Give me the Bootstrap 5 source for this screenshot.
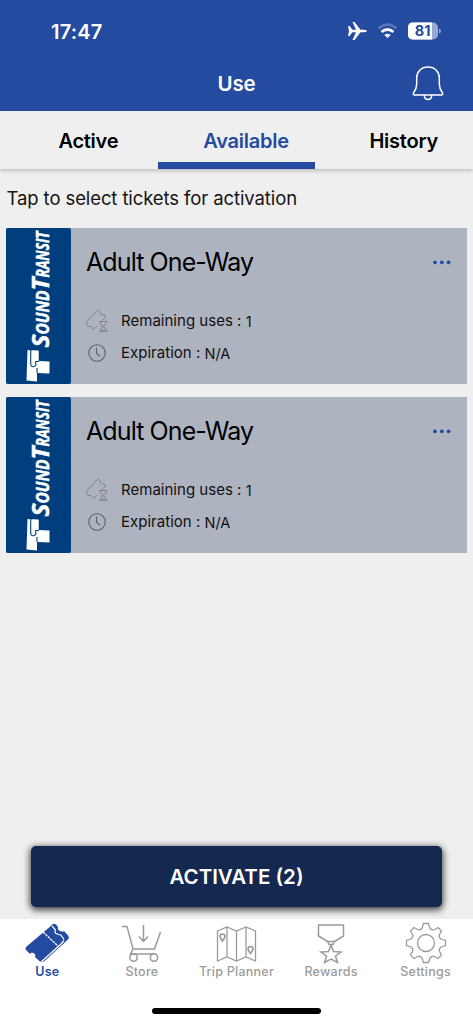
<!DOCTYPE html>
<html lang="en">
<head>
<meta charset="utf-8">
<meta name="viewport" content="width=device-width, initial-scale=1">
<title>Use tickets</title>
<link href="https://cdn.jsdelivr.net/npm/bootstrap@5.3.0/dist/css/bootstrap.min.css" rel="stylesheet">
<style>
  :root { --brand: #244b9f; --navy: #15284f; --line: #9b9b9b; }
  body { font-family: Inter, "Liberation Sans", sans-serif; background: #efefef; color: #000; height: 1024px; overflow: hidden; }
  svg { display: block; flex: none; }
  .app-top { background: var(--brand); height: 111px; color: #fff; }
  .status { height: 62px; padding: 0 32px 0 51px; }
  .clock { font-size: 20px; font-weight: 600; letter-spacing: .2px; padding-top: 2px; }
  .app-title { font-size: 20.5px; font-weight: 600; letter-spacing: -.1px; height: 43px; padding-top: 1px; }
  .bell { right: 29px; top: 4px; }
  .tabs { height: 58px; box-shadow: 0 2px 4px rgba(0,0,0,.2); background: #efefef; }
  .tabs a { color: #000; font-size: 20px; font-weight: 600; padding-left: 19px; padding-top: 8px; border-bottom: 7px solid transparent; letter-spacing: -.25px; }
  .tabs a.current { color: var(--brand); border-color: var(--brand); }
  .prompt { font-size: 18.5px; line-height: 24px; padding: 17px 7px 0 6.5px; margin-bottom: 18px; letter-spacing: -.1px; color: #141414; }
  .ticket { height: 156px; margin: 0 6px 13px; background: #adb3bf; }
  .agency { width: 65px; background: #003e7e; border-radius: 2px; }
  .ticket-body { padding: 18px 16px 0 15px; }
  .ticket-name { font-size: 25px; line-height: 33px; font-weight: 400; letter-spacing: -.9px; margin-bottom: 26px; }
  .fact { font-size: 15px; height: 32px; color: #111; }
  .fact-icon { width: 22px; margin-right: 13px; }
  .fact-label { letter-spacing: .02px; }
  .fact-value { font-size: 14.5px; position: relative; top: 1px; }
  .activate { margin: 0 31px 12px; height: 61px; padding-top: 3px; background: var(--navy); color: #fff; border: 0; border-radius: 5px; font-size: 20.5px; font-weight: 600; box-shadow: 0 2px 7px 1px rgba(0,0,0,.75); }
  .dock { height: 105px; background: #fff; }
  .dock a { color: var(--line); font-size: 12.5px; font-weight: 500; line-height: 16px; padding-top: 3px; letter-spacing: .25px; }
  .dock a.current { color: var(--brand); font-weight: 600; }
  .home-bar { width: 169px; height: 6px; border-radius: 3px; background: #000; margin-bottom: 10px; }
</style>
</head>
<body class="d-flex flex-column">
<svg width="0" height="0" class="position-absolute">
  <defs>
    <symbol id="agency-logo" viewBox="0 0 65 156">
      <text transform="translate(43.3 119.5) rotate(-90)" font-family="Open Sans, sans-serif" font-weight="700" font-style="italic" fill="#fff" stroke="#fff" stroke-width=".5"><tspan font-size="22.500" textLength="13" lengthAdjust="spacingAndGlyphs">S</tspan><tspan font-size="18" textLength="44" lengthAdjust="spacingAndGlyphs">OUND</tspan><tspan font-size="22.500" textLength="13" lengthAdjust="spacingAndGlyphs">T</tspan><tspan font-size="18" textLength="46" lengthAdjust="spacingAndGlyphs">RANSIT</tspan></text>
      <path fill="#fff" d="M21.500 122 32.500 123V133L43.500 133.500V145.500L31 145V153.500L20.500 152.500z"/>
      <path fill="none" stroke="#003e7e" stroke-width="1.100" d="M24.700 121V136Q25 139.500 28 138.500T29.500 135V133.500H33M20.500 137.500V139M31 145V140"/>
      <path fill="#fff" d="M26 122.500H32.500V132.500H30Q28.800 133 28.800 135.500Q28.300 137.500 27 137.500T26 136z"/>
    </symbol>
    <symbol id="uses" viewBox="0 0 22 24">
      <g fill="none" stroke="#828487" stroke-width="1"><path d="M11 17 7.500 20.500Q6 20 6 18.500T3 17.500T.8 12.500L11.500 1.500Q13 .5 14 2.500Q13.500 5 15.500 5.500T18.500 6L19.500 8 16 11.500"/><path d="M13 12.500H21.500M13 22.500H21.500M14 12.500Q14 16 17.200 17.500Q20.500 16 20.500 12.500M14 22.500Q14 19 17.200 17.500Q20.500 19 20.500 22.500M15.500 21H19"/></g>
    </symbol>
    <symbol id="expiry" viewBox="0 0 22 22"><g fill="none" stroke="#5e6268" stroke-width="1.100"><circle cx="11" cy="11" r="8.200"/><path d="M10.500 5.500V11.500L14 14"/></g></symbol>
  </defs>
</svg>

<header class="app-top">
  <div class="status d-flex align-items-center justify-content-between">
    <span class="clock">17:47</span>
    <svg width="94" height="22" viewBox="0 0 94 22">
      <path fill="#fff" d="M1 6H2.500L5.500 9.700H9L5.500 2H7.500L13.500 9.700H17Q20 10 20 11T17 12.300H13.500L7.500 20H5.500L9 12.300H5.500L2.500 16H1L2 11z"/>
      <path d="M31.500 8.500Q40.500 .500 49.500 8.500" fill="none" stroke="#5a77b8" stroke-width="2.500"/>
      <path d="M34.500 12Q40.500 7 46.500 12" fill="none" stroke="#fff" stroke-width="2.700"/>
      <path d="M37.300 15Q40.500 12.500 43.700 15L40.500 18z" fill="#fff"/>
      <rect x="61" y="2.500" width="30" height="17" rx="5" fill="#98a9d1"/>
      <path d="M66 2.500H85V19.500H66Q61 19.500 61 14.500V7.500Q61 2.500 66 2.500z" fill="#fff"/>
      <path d="M92 8.500Q94 9 94 11T92 13.500z" fill="#98a9d1"/>
      <text x="75.700" y="16.200" font-size="14.500" font-weight="700" text-anchor="middle" fill="#244b9f">81</text>
    </svg>
  </div>
  <div class="app-title position-relative d-flex align-items-center justify-content-center">
    Use
    <svg class="bell position-absolute" width="32" height="35" viewBox="0 0 32 35" fill="none" stroke="#fff" stroke-width="1.500"><path d="M16 1C9 1 4.700 6 4.700 12V18C4.700 22 3 25 1.500 27Q1 29 2.500 29H29.500Q31 29 30.500 27C29 25 27.300 22 27.300 18V12C27.300 6 23 1 16 1zM12.300 29Q12.300 33.500 16 33.500T19.700 29"/></svg>
  </div>
</header>

<nav class="tabs row g-0 flex-shrink-0 text-center">
  <a href="#" class="col d-flex align-items-center justify-content-center text-decoration-none">Active</a>
  <a href="#" class="col d-flex align-items-center justify-content-center text-decoration-none current">Available</a>
  <a href="#" class="col d-flex align-items-center justify-content-center text-decoration-none">History</a>
</nav>

<main class="flex-grow-1">
  <p class="prompt">Tap to select tickets for activation</p>
  <article class="ticket d-flex">
    <div class="agency"><svg width="65" height="156"><use href="#agency-logo"/></svg></div>
    <div class="ticket-body flex-grow-1">
      <div class="d-flex justify-content-between">
        <h2 class="ticket-name">Adult One-Way</h2>
        <svg width="18" height="32" fill="#244b9f"><circle cx="2" cy="16.300" r="1.900"/><circle cx="8.800" cy="16.300" r="1.900"/><circle cx="15.600" cy="16.300" r="1.900"/></svg>
      </div>
      <div class="fact d-flex align-items-center"><svg class="fact-icon" width="22" height="24"><use href="#uses"/></svg><span class="fact-label">Remaining uses :&nbsp;</span><span class="fact-value">1</span></div>
      <div class="fact d-flex align-items-center"><svg class="fact-icon" width="22" height="22"><use href="#expiry"/></svg><span class="fact-label">Expiration :&nbsp;</span><span class="fact-value">N/A</span></div>
    </div>
  </article>
  <article class="ticket d-flex">
    <div class="agency"><svg width="65" height="156"><use href="#agency-logo"/></svg></div>
    <div class="ticket-body flex-grow-1">
      <div class="d-flex justify-content-between">
        <h2 class="ticket-name">Adult One-Way</h2>
        <svg width="18" height="32" fill="#244b9f"><circle cx="2" cy="16.300" r="1.900"/><circle cx="8.800" cy="16.300" r="1.900"/><circle cx="15.600" cy="16.300" r="1.900"/></svg>
      </div>
      <div class="fact d-flex align-items-center"><svg class="fact-icon" width="22" height="24"><use href="#uses"/></svg><span class="fact-label">Remaining uses :&nbsp;</span><span class="fact-value">1</span></div>
      <div class="fact d-flex align-items-center"><svg class="fact-icon" width="22" height="22"><use href="#expiry"/></svg><span class="fact-label">Expiration :&nbsp;</span><span class="fact-value">N/A</span></div>
    </div>
  </article>
</main>

<button class="activate flex-shrink-0" type="button">ACTIVATE (2)</button>

<footer class="dock d-flex flex-column flex-shrink-0 justify-content-between align-items-center">
  <nav class="row g-0 w-100">
    <a href="#" class="col d-flex flex-column align-items-center text-decoration-none current">
      <svg width="46" height="42" viewBox="0 0 46 42"><path fill="#244b9f" d="M2 25 28 3Q29.500 1 32 2.500L34 5Q33 7.500 36 9T40 9L44.500 14Q45.500 16 44 17.500L20 39.500 17 40.500 11 35Q12 32 9.500 31T6 32L2 28Q1 26.500 2 25z"/><path fill="none" stroke="#fff" stroke-width="1.200" d="M16 41 36.500 22.500 40 18.500M28 4 31.500 8Q30 11 33 12T37 13L40 17.500"/><path fill="none" stroke="#fff" stroke-width="1.300" stroke-dasharray="2.500 .8" d="M19 10 34 24"/></svg>Use</a>
    <a href="#" class="col d-flex flex-column align-items-center text-decoration-none">
      <svg width="42" height="42" viewBox="0 0 42 42" fill="none" stroke="#9b9b9b" stroke-width="1.500"><path d="M1 4.500H6L12 27H33.500L39.500 10M12 27 9.500 32H33.500M22.500 3V19M18 14.500 22.500 19.500 27 14.500"/><circle cx="12.500" cy="35.500" r="3.700"/><circle cx="33" cy="35.500" r="3.700"/></svg>Store</a>
    <a href="#" class="col d-flex flex-column align-items-center text-decoration-none">
      <svg width="42" height="42" viewBox="0 0 42 42" fill="none" stroke="#9b9b9b" stroke-width="1.300"><path d="M2.500 9 12 5 21.500 9 31 5 40.500 9V39L31 35 21.500 39 12 35 2.500 39zM12 5V35M21.500 9V39M31 5V35"/><path stroke-width="1.700" d="M7.500 19Q5 16 5 14.500A2.500 2.500 0 0 1 10 14.500Q10 16 7.500 19zM35.500 31.500Q33 28.500 33 27A2.500 2.500 0 0 1 38 27Q38 28.500 35.500 31.500z"/></svg>Trip Planner</a>
    <a href="#" class="col d-flex flex-column align-items-center text-decoration-none">
      <svg width="42" height="42" viewBox="0 0 42 42" fill="none" stroke="#9b9b9b" stroke-width="1.500"><path d="M8.500 3H33.500V14L24.500 19.500H17.500L8.500 14zM17.500 19.500 19 22.500H23L24.500 19.500M21 23 23.500 29.500 31 30 25.500 34 27.500 40.500 21 37 14.500 40.500 16.500 34 11 30 18.500 29.500z"/></svg>Rewards</a>
    <a href="#" class="col d-flex flex-column align-items-center text-decoration-none">
      <svg width="42" height="42" viewBox="0 0 42 42" fill="none" stroke="#9b9b9b" stroke-width="1.300"><circle cx="21" cy="21" r="8.500"/><path d="M18.500 1.500H23.500L25 6.500Q27 8.500 30 7.500L33 5.500 36.500 9 34.500 12.500Q33.500 15.500 36 17L40.500 18.500V23.500L36 25Q33.500 27 34.500 29.500L36.500 33 33 36.500 29.500 34.500Q27 33.500 25 36L23.500 40.500H18.500L17 36Q15 33.500 12.500 34.500L9 36.500 5.500 33 7.500 29.500Q8.500 27 6 25L1.500 23.500V18.500L6 17Q8.500 15 7.500 12.500L5.500 9 9 5.500 12.500 7.500Q15 8.500 17 6.500z"/></svg>Settings</a>
  </nav>
  <div class="home-bar"></div>
</footer>
<script src="https://cdn.jsdelivr.net/npm/bootstrap@5.3.0/dist/js/bootstrap.bundle.min.js"></script>
</body>
</html>
